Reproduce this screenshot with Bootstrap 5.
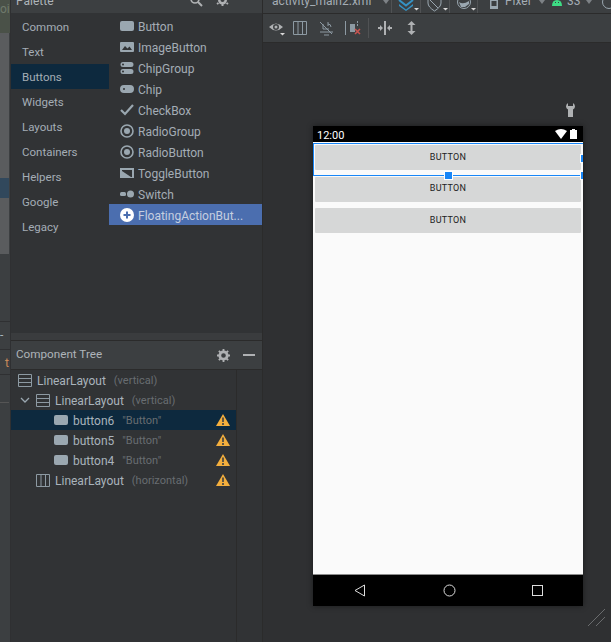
<!DOCTYPE html>
<html lang="en">
<head>
    <meta charset="UTF-8">
    <title>Layout Editor</title>
    <link href="https://cdn.jsdelivr.net/npm/bootstrap@5.3.0/dist/css/bootstrap.min.css" rel="stylesheet">
    <style>
        html, body { height: 642px; overflow: hidden; }
        body { background: #2f3032; font-family: Roboto, "Noto Sans", "Liberation Sans", sans-serif; font-size: 12px; color: #a9b3bc; }
        svg { display: block; flex: none; }
        .shell { height: 642px; }
        .side-strip { width: 11px; background: #3c3f41; border-right: 1px solid #2f3032; overflow: hidden; }
        .strip-top { height: 33px; background: #4a5148; color: #6f7a6c; font-size: 12px; line-height: 16px; padding-top: 1px; white-space: nowrap; }
        .strip-track { height: 221px; width: 9px; background: #5a5c5e; padding-top: 145px; }
        .strip-sel { height: 20px; background: #31485c; }
        .strip-plain { height: 68px; border-bottom: 1px solid #2f3032; }
        .strip-tab { height: 28px; line-height: 26px; color: #a9b3bc; border-bottom: 1px solid #2f3032; }
        .strip-tab.warm { height: 25px; color: #c98a5a; text-align: right; padding-right: 1px; }
        .strip-low { height: 28px; border-bottom: 1px solid #555; width: 9px; }
        .tool-col { width: 252px; background: #313335; border-right: 1px solid #2b2b2b; }
        .palette-head { height: 13px; background: #3c3f41; color: #aeb4b9; font-size: 12px; line-height: 3px; padding: 0 33px 0 5px; overflow: hidden; }
        .head-icons { gap: 13px; }
        .palette-body { height: 320px; }
        .cat-list { width: 98px; padding-top: 1px; }
        .cat-item { height: 25px; line-height: 27px; padding-left: 11px; color: #a4adb5; font-size: 11.5px; }
        .cat-item.active { background: #0d293e; }
        .widget-list { width: 153px; padding-top: 2px; }
        .widget-item { height: 21px; gap: 4px; padding-left: 11px; color: #a4adb5; font-size: 12px; white-space: nowrap; }
        .widget-item span { margin-top: 2px; }
        .widget-item.active { background: #4b6eaf; color: #c5cfe0; }
        .split-bar { height: 8px; background: #3a3c3e; border-bottom: 1px solid #2b2b2b; }
        .tree-head { height: 29px; background: #3c3f41; border-bottom: 1px solid #2b2b2b; padding: 0 7px 0 5px; color: #aeb4b9; font-size: 11.7px; }
        .tree-body { height: 272px; }
        .tree-rows { width: 226px; border-right: 1px solid #2b2b2b; height: 100%; }
        .tree-row { height: 20px; gap: 5px; padding-right: 6px; font-size: 12px; color: #a9b3bc; white-space: nowrap; }
        .tree-row span { margin-top: 2px; }
        .tree-row.active { background: #0d293e; }
        .tree-row .tree-hint { color: #686d71; font-size: 11px; margin-left: 3px; }
        .indent-1 { padding-left: 7px; }
        .indent-2 { padding-left: 9px; }
        .indent-3 { padding-left: 43px; }
        .indent-4 { padding-left: 25px; }
        .design-col { width: 348px; }
        .top-bar { height: 14px; background: #3c3f41; border-bottom: 1px solid #2b2b2b; color: #a4adb5; padding-left: 9px; font-size: 12px; line-height: 3px; overflow: hidden; white-space: nowrap; }
        .bar-sep { width: 1px; height: 13px; background: #505254; flex: none; }
        .cell-file { width: 110px; flex: none; }
        .cell-arrow { width: 9px; flex: none; }
        .cell-icon { width: 28px; flex: none; padding-left: 6px; }
        .cell-icon.slim { width: 27px; padding-left: 7px; }
        .cell-device { width: 73px; flex: none; padding-left: 12px; gap: 7px; }
        .cell-api { width: 50px; flex: none; gap: 4px; }
        .tool-bar { height: 29px; background: #3c3f41; border-bottom: 1px solid #2b2b2b; padding-left: 6px; }
        .tool-sep { width: 1px; height: 20px; background: #505254; }
        .tb-eye { margin-right: 8px; }
        .tb-grid { margin-right: 12px; }
        .tb-mute { margin-right: 11px; }
        .tb-line { margin-right: 4px; height: 14px; background: #8d9aa3; }
        .tb-err { margin-right: 7px; }
        .tb-sep { margin-right: 9px; }
        .tb-gap { margin-right: 15px; }
        .canvas { height: 599px; padding: 83px 28px 0 50px; position: relative; }
        .device { width: 270px; height: 480px; background: #fafafa; box-shadow: 0 0 6px rgba(0,0,0,.45); position: relative; }
        .device-clip { position: absolute; inset: 0; overflow: hidden; }
        .status-bar { height: 16px; background: #000; color: #fff; font-size: 11px; line-height: 12px; padding: 4px 6px 0 4px; }
        .status-icons { gap: 3px; margin-top: -1px; }
        .phone-body { padding: 3px 2px 0; flex: 1; border-bottom: 1px solid #8c8c8c; }
        .phone-btn { height: 25px; background: #d6d7d7; color: #222; font-size: 9px; letter-spacing: .3px; margin-bottom: 6.500px; border-radius: 1px; }
        .nav-bar { height: 31px; background: #000; padding: 0 40px 0 41px; }
        .sel-box { position: absolute; left: 0; top: 17px; width: 271px; height: 33px; border: 1px solid #1886f7; }
        .grab { position: absolute; width: 9px; height: 9px; background: #1886f7; border: 1px solid #fff; }
        .grab-mid { left: 131px; top: 45px; }
        .grab-side { left: 267px; top: 28px; }
        .grab-corner { left: 267px; top: 45px; }
        .wrench { position: absolute; left: 303px; top: 60px; }
        .grip { position: absolute; right: 5px; bottom: 15px; }
    </style>
</head>
<body>
    <div class="shell d-flex">
        <div class="side-strip">
            <div class="strip-top">oid</div>
            <div class="strip-track">
                <div class="strip-sel"></div>
            </div>
            <div class="strip-plain"></div>
            <div class="strip-tab">-</div>
            <div class="strip-tab warm">t</div>
            <div class="strip-low"></div>
        </div>

        <div class="tool-col d-flex flex-column">
            <div class="palette-head d-flex justify-content-between">
                <span>Palette</span>
                <span class="head-icons d-flex">
                    <svg width="14" height="8" viewBox="0 0 14 8"><circle cx="6" cy="-1" r="4" fill="none" stroke="#afb1b3" stroke-width="1.600"/><path d="M9 2l4 4" stroke="#afb1b3" stroke-width="2"/></svg>
                    <svg width="13" height="8" viewBox="0 0 13 8"><circle cx="6.500" cy="0" r="4.500" fill="#afb1b3"/><circle cx="6.500" cy="0" r="2" fill="#3c3f41"/><path d="M1 4l1.500-1M12 4l-1.500-1M6.500 6V4" stroke="#afb1b3" stroke-width="2"/></svg>
                </span>
            </div>
            <div class="palette-body d-flex">
                <div class="cat-list">
                    <div class="cat-item">Common</div>
                    <div class="cat-item">Text</div>
                    <div class="cat-item active">Buttons</div>
                    <div class="cat-item">Widgets</div>
                    <div class="cat-item">Layouts</div>
                    <div class="cat-item">Containers</div>
                    <div class="cat-item">Helpers</div>
                    <div class="cat-item">Google</div>
                    <div class="cat-item">Legacy</div>
                </div>
                <div class="widget-list">
                    <div class="widget-item d-flex align-items-center">
                        <svg width="14" height="14" viewBox="0 0 14 14"><rect y="2" width="14" height="10" rx="2" fill="#9aa7b0"/></svg><span>Button</span>
                    </div>
                    <div class="widget-item d-flex align-items-center">
                        <svg width="14" height="14" viewBox="0 0 14 14"><path fill="#9aa7b0" fill-rule="evenodd" d="M1 2h12a1 1 0 0 1 1 1v8a1 1 0 0 1-1 1H1a1 1 0 0 1-1-1V3a1 1 0 0 1 1-1zM2 10h10L9.500 6.500 7.500 8.500 5 6z"/></svg><span>ImageButton</span>
                    </div>
                    <div class="widget-item d-flex align-items-center">
                        <svg width="14" height="14" viewBox="0 0 14 14"><path fill="#9aa7b0" fill-rule="evenodd" d="M3 1h8a2.500 2.500 0 0 1 0 5H3a2.500 2.500 0 0 1 0-5zM3 2.500a1 1 0 1 0 0 2 1 1 0 0 0 0-2zM3 8h8a2.500 2.500 0 0 1 0 5H3a2.500 2.500 0 0 1 0-5zM3 9.500a1 1 0 1 0 0 2 1 1 0 0 0 0-2z"/></svg><span>ChipGroup</span>
                    </div>
                    <div class="widget-item d-flex align-items-center">
                        <svg width="14" height="14" viewBox="0 0 14 14"><path fill="#9aa7b0" fill-rule="evenodd" d="M4 3h6a4 4 0 0 1 0 8H4a4 4 0 0 1 0-8zM4 6a1 1 0 1 0 0 2 1 1 0 0 0 0-2z"/></svg><span>Chip</span>
                    </div>
                    <div class="widget-item d-flex align-items-center">
                        <svg width="14" height="14" viewBox="0 0 14 14"><path fill="none" stroke="#9aa7b0" stroke-width="2.200" d="M1 7l4 4 8-9"/></svg><span>CheckBox</span>
                    </div>
                    <div class="widget-item d-flex align-items-center">
                        <svg width="14" height="14" viewBox="0 0 14 14"><circle cx="7" cy="7" r="6" fill="none" stroke="#9aa7b0" stroke-width="1.600"/><circle cx="7" cy="7" r="3" fill="#9aa7b0"/></svg><span>RadioGroup</span>
                    </div>
                    <div class="widget-item d-flex align-items-center">
                        <svg width="14" height="14" viewBox="0 0 14 14"><circle cx="7" cy="7" r="6" fill="none" stroke="#9aa7b0" stroke-width="1.600"/><circle cx="7" cy="7" r="3" fill="#9aa7b0"/></svg><span>RadioButton</span>
                    </div>
                    <div class="widget-item d-flex align-items-center">
                        <svg width="14" height="14" viewBox="0 0 14 14"><path fill="#9aa7b0" fill-rule="evenodd" d="M0 2h14v10H0zM2 4v1l9 6h1V4z"/></svg><span>ToggleButton</span>
                    </div>
                    <div class="widget-item d-flex align-items-center">
                        <svg width="14" height="14" viewBox="0 0 14 14"><rect y="5" width="6" height="4" rx="1.500" fill="#9aa7b0"/><circle cx="10.500" cy="7" r="3.500" fill="#9aa7b0"/></svg><span>Switch</span>
                    </div>
                    <div class="widget-item active d-flex align-items-center">
                        <svg width="14" height="14" viewBox="0 0 14 14"><circle cx="7" cy="7" r="7" fill="#fff"/><path d="M7 3.500v7M3.500 7h7" stroke="#4b6eaf" stroke-width="2"/></svg><span>FloatingActionBut...</span>
                    </div>
                </div>
            </div>
            <div class="split-bar"></div>
            <div class="tree-head d-flex align-items-center justify-content-between">
                <span>Component Tree</span>
                <span class="head-icons d-flex align-items-center">
                    <svg width="13" height="13" viewBox="0 0 14 14"><circle cx="7" cy="7" r="4" fill="none" stroke="#afb1b3" stroke-width="3"/><path d="M7 0v3M7 11v3M0 7h3M11 7h3M2 2l2 2M10 10l2 2M12 2l-2 2M4 10l-2 2" stroke="#afb1b3" stroke-width="2"/></svg>
                    <svg width="12" height="14" viewBox="0 0 12 14"><path d="M0 7h12" stroke="#afb1b3" stroke-width="2"/></svg>
                </span>
            </div>
            <div class="tree-body">
                <div class="tree-rows">
                    <div class="tree-row indent-1 d-flex align-items-center">
                        <svg width="14" height="15" viewBox="0 0 14 15"><path fill="none" stroke="#8d9aa3" d="M.5 1.500h13v12H.5zM.5 5.500h13M.5 9.500h13"/></svg>
                        <span>LinearLayout</span><span class="tree-hint">(vertical)</span>
                    </div>
                    <div class="tree-row indent-2 d-flex align-items-center">
                        <svg width="11" height="10" viewBox="0 0 11 10"><path fill="none" stroke="#9aa7b0" stroke-width="1.300" d="M1 3l4 4 4-4"/></svg>
                        <svg width="14" height="15" viewBox="0 0 14 15"><path fill="none" stroke="#8d9aa3" d="M.5 1.500h13v12H.5zM.5 5.500h13M.5 9.500h13"/></svg>
                        <span>LinearLayout</span><span class="tree-hint">(vertical)</span>
                    </div>
                    <div class="tree-row active indent-3 d-flex align-items-center">
                        <svg width="14" height="14" viewBox="0 0 14 14"><rect y="2" width="14" height="10" rx="2" fill="#9aa7b0"/></svg>
                        <span>button6</span><span class="tree-hint">"Button"</span>
                        <svg class="ms-auto" width="14" height="12" viewBox="0 0 14 12"><path fill="#f4af3d" d="M7 0l7 12H0z"/><path stroke="#3c3f41" stroke-width="1.600" d="M7 3.500v4.500M7 9v2"/></svg>
                    </div>
                    <div class="tree-row indent-3 d-flex align-items-center">
                        <svg width="14" height="14" viewBox="0 0 14 14"><rect y="2" width="14" height="10" rx="2" fill="#9aa7b0"/></svg>
                        <span>button5</span><span class="tree-hint">"Button"</span>
                        <svg class="ms-auto" width="14" height="12" viewBox="0 0 14 12"><path fill="#f4af3d" d="M7 0l7 12H0z"/><path stroke="#3c3f41" stroke-width="1.600" d="M7 3.500v4.500M7 9v2"/></svg>
                    </div>
                    <div class="tree-row indent-3 d-flex align-items-center">
                        <svg width="14" height="14" viewBox="0 0 14 14"><rect y="2" width="14" height="10" rx="2" fill="#9aa7b0"/></svg>
                        <span>button4</span><span class="tree-hint">"Button"</span>
                        <svg class="ms-auto" width="14" height="12" viewBox="0 0 14 12"><path fill="#f4af3d" d="M7 0l7 12H0z"/><path stroke="#3c3f41" stroke-width="1.600" d="M7 3.500v4.500M7 9v2"/></svg>
                    </div>
                    <div class="tree-row indent-4 d-flex align-items-center">
                        <svg width="14" height="15" viewBox="0 0 14 15"><path fill="none" stroke="#8d9aa3" d="M.5 1.500h13v12H.5zM5 1.500v12M9.500 1.500v12"/></svg>
                        <span>LinearLayout</span><span class="tree-hint">(horizontal)</span>
                        <svg class="ms-auto" width="14" height="12" viewBox="0 0 14 12"><path fill="#f4af3d" d="M7 0l7 12H0z"/><path stroke="#3c3f41" stroke-width="1.600" d="M7 3.500v4.500M7 9v2"/></svg>
                    </div>
                </div>
            </div>
        </div>

        <div class="design-col d-flex flex-column">
            <div class="top-bar d-flex">
                <span class="cell-file">activity_main2.xml</span>
                <svg class="cell-arrow" width="9" height="6" viewBox="0 0 9 6"><path fill="#7d8286" d="M1 0h6L4 4z"/></svg>
                <span class="bar-sep"></span>
                <span class="cell-icon d-flex">
                    <svg width="22" height="13" viewBox="0 0 22 13"><path fill="none" stroke="#3592c4" stroke-width="2" d="M1 0l7 5.500L15 0"/><path fill="#3592c4" d="M1 4l7 5.500L15 4v2l-7 5L1 6z"/><path fill="#d8d8d8" d="M16 8h5l-2.500 2.500z"/></svg>
                </span>
                <span class="bar-sep"></span>
                <span class="cell-icon d-flex">
                    <svg width="22" height="13" viewBox="0 0 22 13"><path fill="none" stroke="#9aa7b0" d="M1 0v3q0 4 6.500 8Q14 7 14 3V0M3 0l8 8"/><path fill="#d8d8d8" d="M16 8h5l-2.500 2.500z"/></svg>
                </span>
                <span class="bar-sep"></span>
                <span class="cell-icon slim d-flex">
                    <svg width="20" height="13" viewBox="0 0 20 13"><circle cx="7" cy="2" r="6.500" fill="none" stroke="#9aa7b0"/><path fill="#9aa7b0" d="M2 2q4 3 10-1v3l-4 3H4z"/><path fill="#d8d8d8" d="M14 8h5l-2.500 2.500z"/></svg>
                </span>
                <span class="bar-sep"></span>
                <span class="cell-device d-flex">
                    <svg width="8" height="9" viewBox="0 0 8 9"><path fill="#9aa7b0" fill-rule="evenodd" d="M0 0h8v9H0zM1.500 1v5h5V1z"/></svg>
                    <span>Pixel</span>
                    <svg class="cell-arrow" width="9" height="6" viewBox="0 0 9 6"><path fill="#7d8286" d="M1 0h6L4 4z"/></svg>
                </span>
                <span class="cell-api d-flex">
                    <svg width="12" height="6" viewBox="0 0 12 6"><path fill="#3ddc84" d="M1 6q0-6 5-6t5 6z"/><path fill="#3c3f41" d="M4 2h1v1H4zM7 2h1v1H7z"/></svg>
                    <span>33</span>
                    <svg class="cell-arrow" width="9" height="6" viewBox="0 0 9 6"><path fill="#7d8286" d="M1 0h6L4 4z"/></svg>
                </span>
                <svg width="12" height="10" viewBox="0 0 12 10"><circle cx="8" cy="2" r="6.500" fill="none" stroke="#9aa7b0"/></svg>
            </div>
            <div class="tool-bar d-flex align-items-center">
                <svg class="tb-eye" width="16" height="16" viewBox="0 0 16 16"><path fill="#afb1b3" fill-rule="evenodd" d="M0 7q7-7 14 0-7 7-14 0zM7 4a3 3 0 1 0 0 6 3 3 0 0 0 0-6z"/><circle cx="7" cy="7" r="1.500" fill="#afb1b3"/><path fill="#d8d8d8" d="M11 13h5l-2.500 2.500z"/></svg>
                <svg class="tb-grid" width="14" height="14" viewBox="0 0 14 14"><path fill="none" stroke="#8d9aa3" d="M.5.500h13v13H.5zM5 .5v13M9.500.5v13"/></svg>
                <svg class="tb-mute" width="15" height="15" viewBox="0 0 15 15"><path fill="none" stroke="#8d9aa3" d="M1 1l12 12M4 3v5h6M9 1v4M1 11h13M5 14h5"/><path fill="none" stroke="#8d9aa3" d="M9 3q3 0 3 3"/></svg>
                <div class="tool-sep tb-line"></div>
                <svg class="tb-err" width="11" height="14" viewBox="0 0 11 14"><path fill="#8d9aa3" d="M0 3h5v8H0z"/><path fill="#8d9aa3" d="M7 0h1v2H7zM7 3h1v2H7z"/><path stroke="#c75450" stroke-width="1.600" d="M5 8l5 5M10 8l-5 5"/></svg>
                <div class="tool-sep tb-sep"></div>
                <svg class="tb-gap" width="14" height="14" viewBox="0 0 14 14"><path fill="#afb1b3" d="M6 0h2v14H6zM0 6h2V4l3 3-3 3V8H0zM14 6h-2V4L9 7l3 3V8h2z"/></svg>
                <svg width="9" height="14" viewBox="0 0 9 14"><path fill="#afb1b3" d="M4.500 0l4 4H5.500v6h3l-4 4-4-4h3V4h-3z"/></svg>
            </div>
            <div class="canvas">
                <svg class="wrench" width="9" height="14" viewBox="0 0 9 14"><path fill="#afb1b3" d="M2 0v3h5V0q2 1 2 3.500 0 2-2 3V14H2V6.500q-2-1-2-3Q0 1 2 0z"/></svg>
                <div class="device d-flex flex-column">
                    <div class="status-bar d-flex justify-content-between">
                        <span>12:00</span>
                        <span class="status-icons d-flex">
                            <svg width="12" height="10" viewBox="0 0 12 10"><path fill="#fff" d="M0 2q6-4 12 0L6 10z"/></svg>
                            <svg width="7" height="10" viewBox="0 0 7 10"><path fill="#fff" d="M2 0h3v1h2v9H0V1h2z"/></svg>
                        </span>
                    </div>
                    <div class="phone-body">
                        <div class="phone-btn d-flex align-items-center justify-content-center">BUTTON</div>
                        <div class="phone-btn d-flex align-items-center justify-content-center">BUTTON</div>
                        <div class="phone-btn d-flex align-items-center justify-content-center">BUTTON</div>
                    </div>
                    <div class="nav-bar d-flex align-items-center justify-content-between">
                        <svg width="12" height="13" viewBox="0 0 12 13"><path fill="none" stroke="#ddd" d="M10.500 1v11L1 6.500z"/></svg>
                        <svg width="13" height="13" viewBox="0 0 13 13"><circle cx="6.500" cy="6.500" r="5.500" fill="none" stroke="#ddd"/></svg>
                        <svg width="11" height="11" viewBox="0 0 11 11"><rect x=".5" y=".5" width="10" height="10" fill="none" stroke="#ddd"/></svg>
                    </div>
                    <div class="device-clip">
                        <div class="sel-box"></div>
                        <div class="grab grab-mid"></div>
                        <div class="grab grab-side"></div>
                        <div class="grab grab-corner"></div>
                    </div>
                </div>
                <svg class="grip" width="18" height="18" viewBox="0 0 18 18"><path stroke="#6a6c6e" d="M0 17L17 0M8 17l9-9"/></svg>
            </div>
        </div>
    </div>
    <script src="https://cdn.jsdelivr.net/npm/bootstrap@5.3.0/dist/js/bootstrap.bundle.min.js"></script>
</body>
</html>
